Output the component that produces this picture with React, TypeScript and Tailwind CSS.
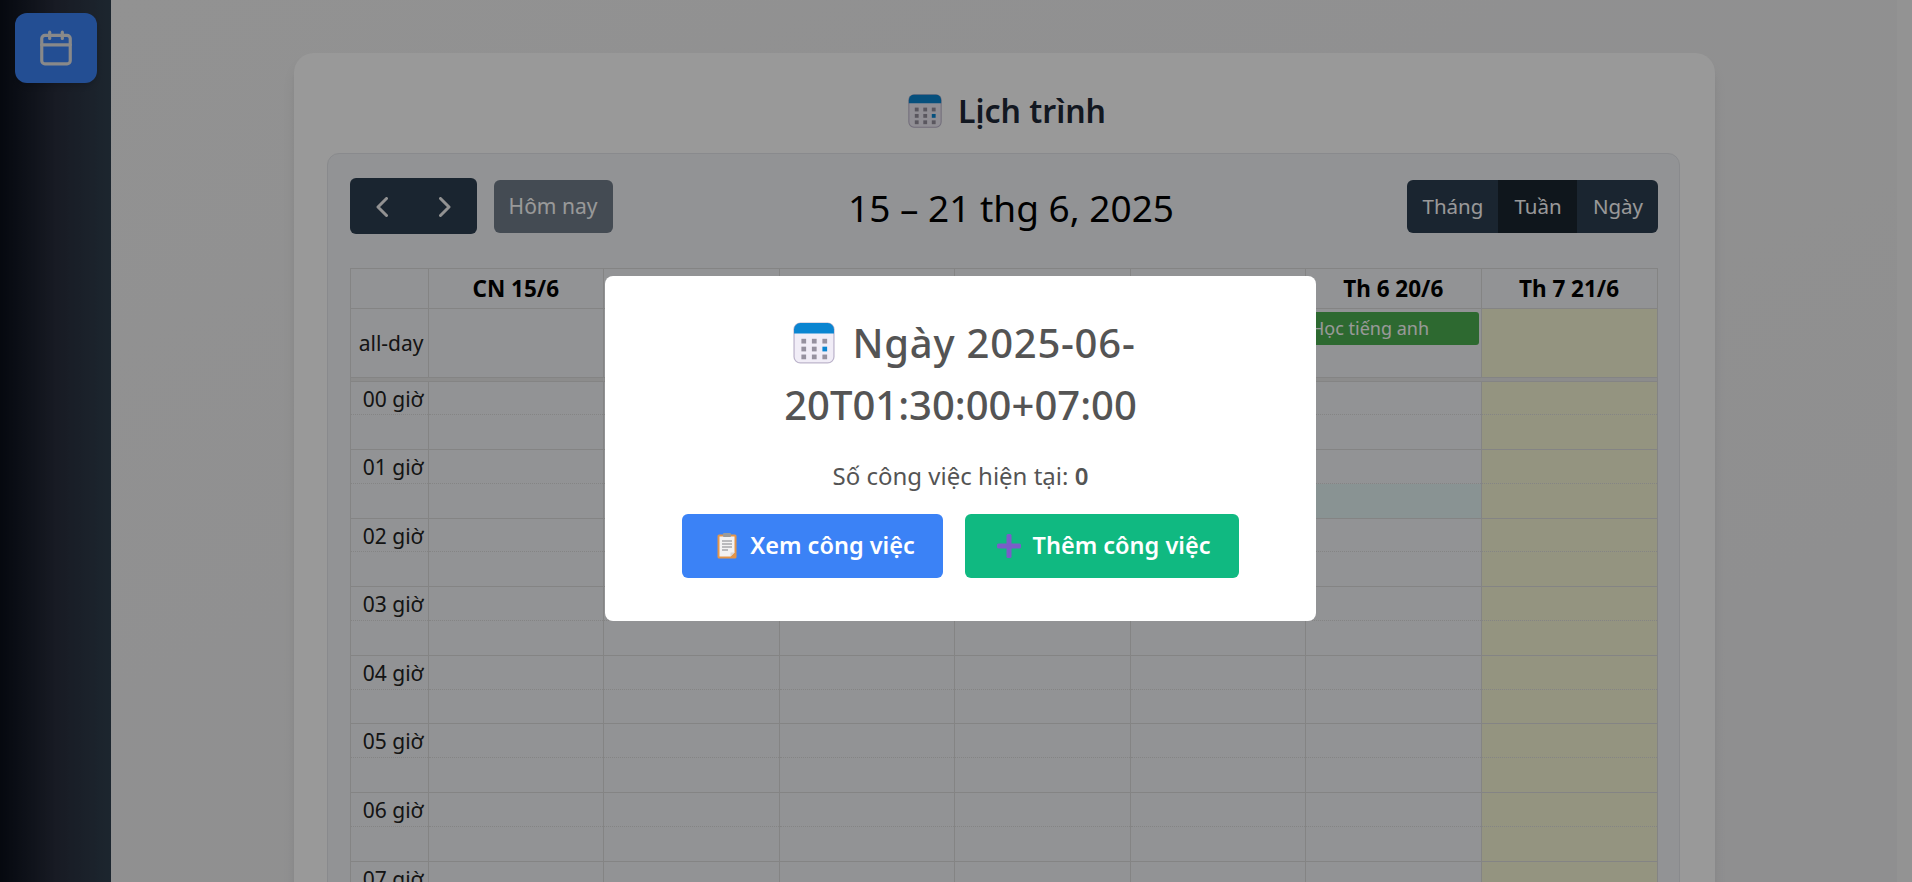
import React from "react";
import { Calendar } from "lucide-react";

const days = ["CN 15/6", "Th 2 16/6", "Th 3 17/6", "Th 4 18/6", "Th 5 19/6", "Th 6 20/6", "Th 7 21/6"];
const hours = ["00 giờ", "01 giờ", "02 giờ", "03 giờ", "04 giờ", "05 giờ", "06 giờ", "07 giờ"];
const gridCols = "grid grid-cols-[78px_repeat(6,175.5px)_minmax(0,1fr)]";

function CalendarEmoji({ size, className }: { size: number; className?: string }) {
  return (
    <svg width={size} height={size} viewBox="0 0 40 40" className={className}>
      <rect x="1" y="1" width="38" height="38" rx="6" fill="#f1edf7" stroke="#bdb5cc" strokeWidth="1.2" />
      <path d="M1 11V7a6 6 0 0 1 6-6h26a6 6 0 0 1 6 6v4z" fill="#0a85d1" />
      {[0, 1, 2].map((r) =>
        [0, 1, 2].map((c) => (
          <rect
            key={`${r}${c}`}
            x={8 + c * 10}
            y={16 + r * 7.5}
            width="4.5"
            height="4.5"
            fill={r === 1 && c === 2 ? "#0a85d1" : "#96919f"}
          />
        ))
      )}
    </svg>
  );
}

function ClipboardEmoji() {
  return (
    <svg width="20" height="26" viewBox="0 0 20 26">
      <rect x="0.5" y="1.5" width="19" height="24" rx="1.5" fill="#e3954a" />
      <path d="M2.5 3.5h15v16l-4 4h-11z" fill="#f3f2f3" />
      <path d="M17.5 19.5l-4 4v-4z" fill="#d9d5d3" />
      <rect x="6" y="0" width="8" height="4" rx="1" fill="#9a9a9a" />
      <path d="M5 8h10M5 11h10M5 14h10M5 17h6" stroke="#a8a8ac" strokeWidth="1.3" />
    </svg>
  );
}

function HourRow({ label, index }: { label: string; index: number }) {
  return (
    <div className={`${gridCols} border-t border-[#dddddd]`}>
      <div className="h-[67.6px] border-l border-[#dddddd]">
        <div className="h-[33.8px] border-b border-dotted border-[#dddddd] pr-[4px] text-right text-[21px] leading-[35px] text-[#222222]">
          {label}
        </div>
      </div>
      {days.map((d, i) => (
        <div
          key={d}
          className={`h-[67.6px] border-l border-[#dddddd] ${i === 6 ? "border-r bg-[#f7f7d5]" : ""}`}
        >
          <div className="h-[33.8px] border-b border-dotted border-[#dddddd]" />
          <div className={`h-[33.8px] ${index === 1 && i === 5 ? "bg-[#e4f5f5]" : ""}`} />
        </div>
      ))}
    </div>
  );
}

export default function App() {
  return (
    <div className="relative flex h-[882px] w-[1912px] overflow-hidden font-['Noto_Sans','Open_Sans',sans-serif]">
      <aside className="h-full w-[111px] shrink-0 bg-gradient-to-r from-[#0a0f1a] via-[#282d3c] via-50% to-[#30404f] pl-[15px] pt-[13px]">
        <div className="flex h-[70px] w-[82px] items-center justify-center rounded-[12px] bg-[#3b82f6] shadow-md">
          <Calendar size={38} strokeWidth={2} className="text-[#e5e5e5]" />
        </div>
      </aside>

      <main className="h-full flex-1 overflow-hidden bg-gradient-to-br from-[#f3f3f3] to-[#eeeef0] pt-[53px]">
        <section className="mx-auto h-[900px] w-[1421px] rounded-[20px] bg-white pl-[33px] pr-[35px] pt-[40px] shadow-lg">
          <h1 className="ml-[8px] flex h-[60px] items-start justify-center gap-[16px] text-[32px] font-semibold leading-[36px] text-[#1f2937]">
            <CalendarEmoji size={34} className="mt-[1px]" />
            <span>Lịch trình</span>
          </h1>
          <div className="h-[800px] rounded-[12px] border border-[#e5e7eb] bg-[#f3f5f8] pl-[22px] pr-[21px] pt-[24px]">
            <div className="flex h-[56px] items-center justify-between">
              <div className="flex items-center gap-[17px]">
                <div className="flex h-[56px] w-[127px] items-center gap-[51px] rounded-[6px] bg-[#2c3e50] pl-[26px] pt-[2px]">
                  <svg width="12" height="20" viewBox="0 0 12 20" fill="none" stroke="#f3f3f3" strokeWidth="3" strokeLinecap="round" strokeLinejoin="round">
                    <path d="M10.5 1.5L2 10l8.5 8.5" />
                  </svg>
                  <svg width="12" height="20" viewBox="0 0 12 20" fill="none" stroke="#f3f3f3" strokeWidth="3" strokeLinecap="round" strokeLinejoin="round">
                    <path d="M1.5 1.5L10 10l-8.5 8.5" />
                  </svg>
                </div>
                <button className="flex h-[53px] w-[119px] items-center justify-center rounded-[6px] bg-[#2c3e50]/[.65] pt-[1px] text-[21px] text-white">
                  Hôm nay
                </button>
              </div>
              <h2 className="ml-[2px] pt-[4px] text-[37px] font-normal text-black">15 – 21 thg 6, 2025</h2>
              <div className="-mr-[1px] flex h-[53px] overflow-hidden rounded-[6px] text-[20.5px] text-white">
                <div className="flex w-[91px] items-center justify-center bg-[#2c3e50] pt-[1px]">Tháng</div>
                <div className="flex w-[79px] items-center justify-center bg-[#1a252f] pt-[1px]">Tuần</div>
                <div className="flex w-[81px] items-center justify-center bg-[#2c3e50] pt-[1px]">Ngày</div>
              </div>
            </div>

            <div className="mt-[34px]">
              <div className={`${gridCols} h-[40px] border-t border-[#dddddd]`}>
                <div className="border-l border-[#dddddd]" />
                {days.map((d, i) => (
                  <div
                    key={d}
                    className={`flex items-center justify-center border-l border-[#dddddd] text-[22.5px] font-bold text-black ${i === 6 ? "border-r" : ""}`}
                  >
                    {d}
                  </div>
                ))}
              </div>
              <div className={`${gridCols} h-[69px] border-t border-[#dddddd]`}>
                <div className="flex items-center justify-end border-l border-[#dddddd] pr-[4px] pt-[1px] text-[21px] text-[#222222]">
                  all-day
                </div>
                {days.map((d, i) => (
                  <div
                    key={d}
                    className={`border-l border-[#dddddd] ${i === 6 ? "border-r bg-[#f7f7d5]" : ""}`}
                  >
                    {i === 5 && (
                      <div className="mx-[1px] mt-[3px] h-[33px] w-[172px] truncate rounded-[3px] bg-[#4caf50] pl-[4px] text-[18px] leading-[32px] text-white">
                        Học tiếng anh
                      </div>
                    )}
                  </div>
                ))}
              </div>
              <div className="h-[3.5px] border-x border-t border-[#dddddd] bg-[#e9e9e9]" />
              {hours.map((h, i) => (
                <HourRow key={h} label={h} index={i} />
              ))}
            </div>
          </div>
        </section>
      </main>

      <div className="h-full w-[15px] shrink-0 bg-[#f5f5f5]" />

      <div className="absolute inset-0 bg-black/40" />

      <div className="absolute left-[605px] top-[276px] h-[345px] w-[711px] rounded-[8px] bg-white pt-[36px] text-center text-[#545454]">
        <h2 className="mx-auto w-[600px] text-[40px] font-medium leading-[62px]">
          <CalendarEmoji size={42} className="ml-[7px] mr-[18px] inline-block align-[-6px]" />
          <span className="tracking-[0.75px]">Ngày 2025-06-</span>20T01:30:00+07:00
        </h2>
        <p className="mt-[24px] text-[24px] leading-[32px]">
          Số công việc hiện tại: <b className="font-semibold">0</b>
        </p>
        <div className="mt-[22px] flex justify-center gap-[22px]">
          <button className="flex h-[64px] w-[261px] items-center justify-center gap-[13px] rounded-[6px] bg-[#3b82f6] pl-[7px] text-[23.5px] font-semibold text-white">
            <ClipboardEmoji />
            Xem công việc
          </button>
          <button className="flex h-[64px] w-[274px] items-center justify-center gap-[12px] rounded-[6px] bg-[#10b981] pl-[3px] text-[23.5px] font-semibold text-white">
            <svg width="24" height="24" viewBox="0 0 24 24" fill="#7a5cc8">
              <rect x="9.5" y="0" width="5" height="24" rx="1.5" />
              <rect x="0" y="9.5" width="24" height="5" rx="1.5" />
            </svg>
            Thêm công việc
          </button>
        </div>
      </div>
    </div>
  );
}
